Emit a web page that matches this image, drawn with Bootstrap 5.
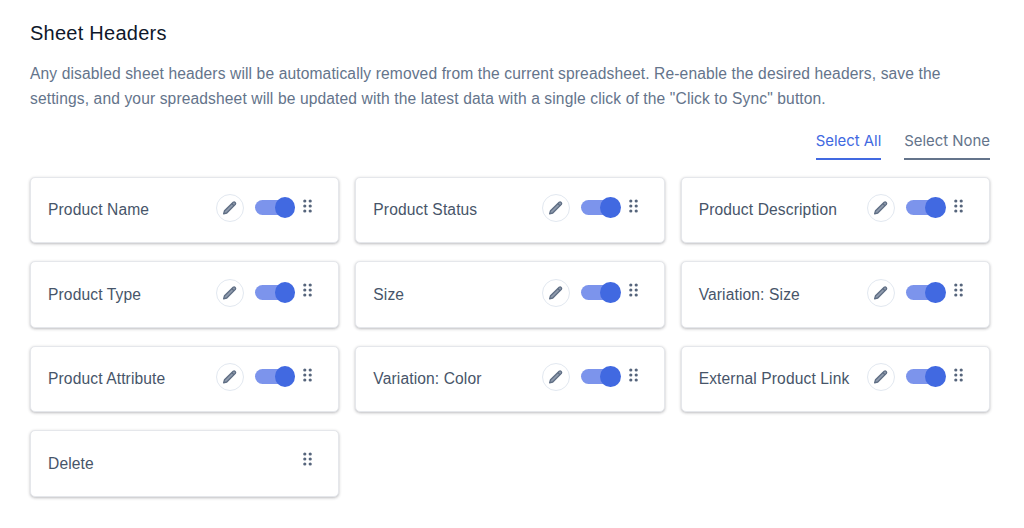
<!DOCTYPE html>
<html lang="en">
<head>
<meta charset="utf-8">
<title>Sheet Headers</title>
<link rel="stylesheet" href="https://cdn.jsdelivr.net/npm/bootstrap@5.3.0/dist/css/bootstrap.min.css">
<style>
body{background:#fff;font-family:"Liberation Sans",Arial,sans-serif}
.page-wrap{padding:20px 34px 31px 30px}
.sheet-title{font-size:20px;line-height:26px;font-weight:400;color:#0f172a;margin:0 0 15px;letter-spacing:.25px}
.sheet-desc{font-size:15.6px;line-height:25px;color:#64748b;margin:0;letter-spacing:.12px}
.sel-row{margin-top:14px;gap:23px;margin-bottom:16.6px}
.sel-link{font-family:Inter,sans-serif;font-size:14.9px;line-height:20px;padding:6px 0 7px;text-decoration:none;border-bottom:2px solid}
.sel-all{color:#4169e1}
.sel-none{color:#64748b}
.hdr-grid{display:grid;grid-template-columns:repeat(3,1fr);column-gap:16px;row-gap:18px}
.hdr-item{height:66.5px;border:1px solid #e5e7eb;border-radius:5px;box-shadow:0 1px 3px rgba(30,30,40,.3);padding:0 17px;background:#fff}
.hdr-name{font-size:15.6px;letter-spacing:.12px;color:#475569;flex:1;padding-top:.6px}
.hdr-ctrl{margin-top:-3px;align-items:center}
.edit-btn{width:28px;height:28px;border:1px solid #e2e8f0;border-radius:50%;background:#fff;padding:0;margin-right:11px}
.tgl{width:40px;height:21px;margin-right:8px;align-items:center;margin-top:-1px}
.tgl-track{width:36px;height:15px;border-radius:8px;background:#7c94ec}
.tgl-knob{width:21px;height:21px;border-radius:50%;background:#4169e1;margin-left:-16px}
.drag{display:block;margin-top:-5px;margin-right:9px}
</style>
</head>
<body>
<div class="page-wrap">
  <h2 class="sheet-title">Sheet Headers</h2>
  <p class="sheet-desc">Any disabled sheet headers will be automatically removed from the current spreadsheet. Re-enable the desired headers, save the settings, and your spreadsheet will be updated with the latest data with a single click of the "Click to Sync" button.</p>
  <div class="d-flex justify-content-end sel-row">
    <a href="#" class="sel-link sel-all">Select All</a>
    <a href="#" class="sel-link sel-none">Select None</a>
  </div>
  <div class="hdr-grid" id="grid"></div>
</div>
<template id="ctrl">
  <button type="button" class="edit-btn d-flex align-items-center justify-content-center" aria-label="Edit">
    <svg width="16" height="16" viewBox="0 0 16 16" fill="none" stroke="#5f6e84" stroke-width="1.3" stroke-linejoin="round"><path d="M11.2 2.2a1.6 1.6 0 0 1 2.2 2.2l-8.6 8.6-3.2.9.9-3.2 8.7-8.5z" fill="#8e9aac"/><path d="M9.8 3.6l2.2 2.2"/></svg>
  </button>
  <span class="tgl d-flex"><span class="tgl-track"></span><span class="tgl-knob"></span></span>
</template>
<script>
const names=["Product Name","Product Status","Product Description","Product Type","Size","Variation: Size","Product Attribute","Variation: Color","External Product Link","Delete"];
const drag='<svg class="drag" width="9" height="14" viewBox="0 0 9 14" fill="#56657c"><circle cx="1.8" cy="2" r="1.6"/><circle cx="7.2" cy="2" r="1.6"/><circle cx="1.8" cy="7" r="1.6"/><circle cx="7.2" cy="7" r="1.6"/><circle cx="1.8" cy="12" r="1.6"/><circle cx="7.2" cy="12" r="1.6"/></svg>';
const tpl=document.getElementById('ctrl').innerHTML;
document.getElementById('grid').innerHTML=names.map(n=>`<div class="hdr-item d-flex align-items-center"><span class="hdr-name">${n}</span><div class="hdr-ctrl d-flex">${n==='Delete'?'':tpl}${drag}</div></div>`).join('');
</script>
<script src="https://cdn.jsdelivr.net/npm/bootstrap@5.3.0/dist/js/bootstrap.bundle.min.js"></script>
</body>
</html>
